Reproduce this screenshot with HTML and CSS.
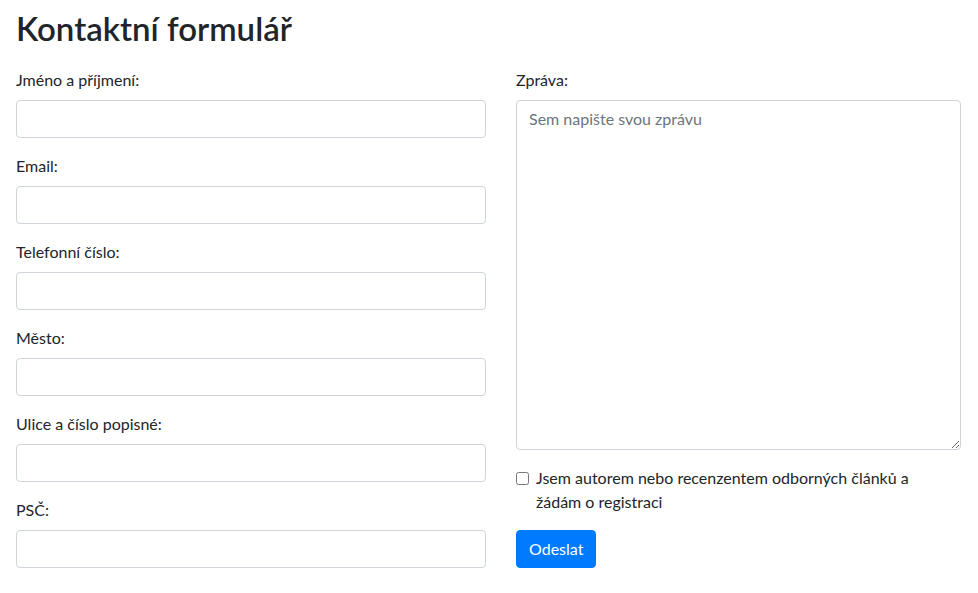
FILE: index.html
```html
<!DOCTYPE html>
<html lang="cs">
<head>
<meta charset="utf-8">
<title>Kontaktní formulář</title>
<link rel="stylesheet" href="styles.css">
</head>
<body>
<main class="page">
  <h2 class="title">Kontaktní formulář</h2>
  <form class="form">
    <div class="col col-left">
      <div class="group">
        <label class="label" for="name">Jméno a příjmení:</label>
        <input class="control" id="name" type="text">
      </div>
      <div class="group">
        <label class="label" for="email">Email:</label>
        <input class="control" id="email" type="email">
      </div>
      <div class="group">
        <label class="label" for="phone">Telefonní číslo:</label>
        <input class="control" id="phone" type="tel">
      </div>
      <div class="group">
        <label class="label" for="city">Město:</label>
        <input class="control" id="city" type="text">
      </div>
      <div class="group">
        <label class="label" for="street">Ulice a číslo popisné:</label>
        <input class="control" id="street" type="text">
      </div>
      <div class="group">
        <label class="label" for="zip">PSČ:</label>
        <input class="control" id="zip" type="text">
      </div>
    </div>
    <div class="col col-right">
      <div class="group">
        <label class="label" for="msg">Zpráva:</label>
        <textarea class="control area" id="msg" placeholder="Sem napište svou zprávu"></textarea>
      </div>
      <div class="group check">
        <input class="check-input" id="reg" type="checkbox">
        <label class="check-label" for="reg">Jsem autorem nebo recenzentem odborných článků a žádám o registraci</label>
      </div>
      <button class="btn" type="button">Odeslat</button>
    </div>
  </form>
</main>
</body>
</html>
```
FILE: styles.css
```css
* { box-sizing: border-box; }
html, body { margin: 0; padding: 0; background: #fff; }
body {
  font-family: "Lato", "Noto Sans", sans-serif;
  font-size: 16px;
  line-height: 24px;
  color: #212529;
}
.page { padding: 9px 17px 0 16px; }
.title {
  margin: 0 0 21px 0;
  font-size: 33px;
  line-height: 38px;
  font-weight: 600;
}
.form {
  display: grid;
  grid-template-columns: 470px 445px;
  column-gap: 30px;
  align-items: start;
}
.group { margin-bottom: 16px; }
.label { display: block; margin-bottom: 8px; }
.control {
  display: block;
  width: 100%;
  height: 38px;
  padding: 6px 12px;
  font: inherit;
  color: #495057;
  background: #fff;
  border: 1px solid #ced4da;
  border-radius: 4px;
}
.control::placeholder { color: #6c757d; opacity: 1; }
.area { height: 350px; resize: vertical; }
.check { display: flex; align-items: flex-start; margin-bottom: 16px; }
.check-input { width: 13px; height: 13px; margin: 6px 7px 0 0; flex: none; }
.check-label { flex: 1; padding-right: 40px; }
.btn {
  font: inherit;
  color: #fff;
  background: #007bff;
  border: 1px solid #007bff;
  border-radius: 4px;
  height: 38px;
  padding: 6px 12px;
}
```
